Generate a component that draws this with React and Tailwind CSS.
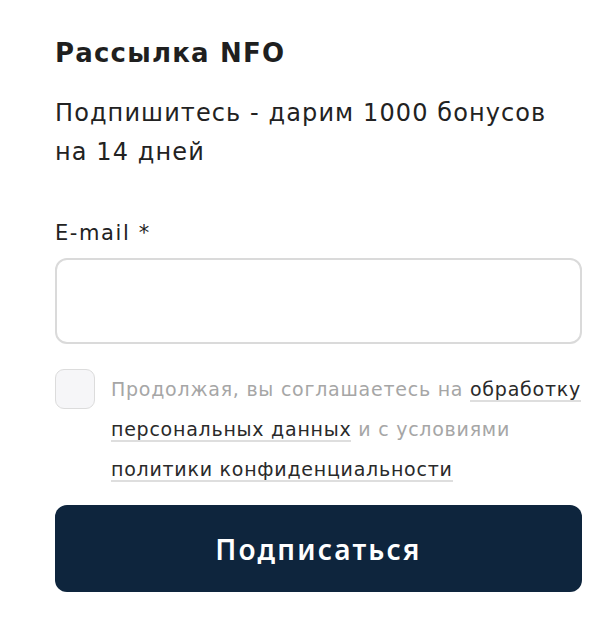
import React from 'react';

export default function App() {
  return (
    <div className="min-h-screen bg-white font-['DejaVu_Sans','Noto_Sans',sans-serif] text-[#1f1f1f]">
      <div className="pl-[55px] pr-[29px] pt-[37px]">
        <h2 className="text-[26px] leading-[32px] font-bold tracking-[1.2px]">Рассылка NFO</h2>
        <p className="mt-[25px] text-[24px] leading-[39px] tracking-[1.1px] text-[#222]">
          Подпишитесь - дарим 1000 бонусов на 14 дней
        </p>

        <form className="mt-[47px]" onSubmit={(e) => e.preventDefault()}>
          <label className="block text-[21px] leading-[28px] tracking-[1.6px] text-[#222]">E-mail *</label>
          <input
            type="email"
            className="mt-[11px] block w-full h-[86px] rounded-[12px] border-2 border-[#dadada] bg-white px-5 text-[20px] outline-none"
          />

          {/* Agreement */}
          <div className="mt-[25px] flex gap-4">
            <span className="w-10 h-10 shrink-0 rounded-[9px] border-[1.5px] border-[#dcdcdc] bg-[#f6f6f8]" />
            <p className="text-[19px] leading-[40px] tracking-[0.75px] text-[#a6a6a6]">
              Продолжая, вы соглашаетесь на{' '}
              <a className="text-[#2a2a2a] border-b-2 border-[#dedede]">обработку персональных данных</a>{' '}
              и с условиями{' '}
              <a className="text-[#2a2a2a] border-b-2 border-[#dedede]">политики конфиденциальности</a>
            </p>
          </div>

          <button
            type="submit"
            className="mt-[16px] w-full h-[87px] rounded-[12px] bg-[#0e253d] text-white font-['Noto_Sans',sans-serif] text-[28px] font-semibold tracking-[2.2px]"
          >
            Подписаться
          </button>
        </form>
      </div>
    </div>
  );
}
